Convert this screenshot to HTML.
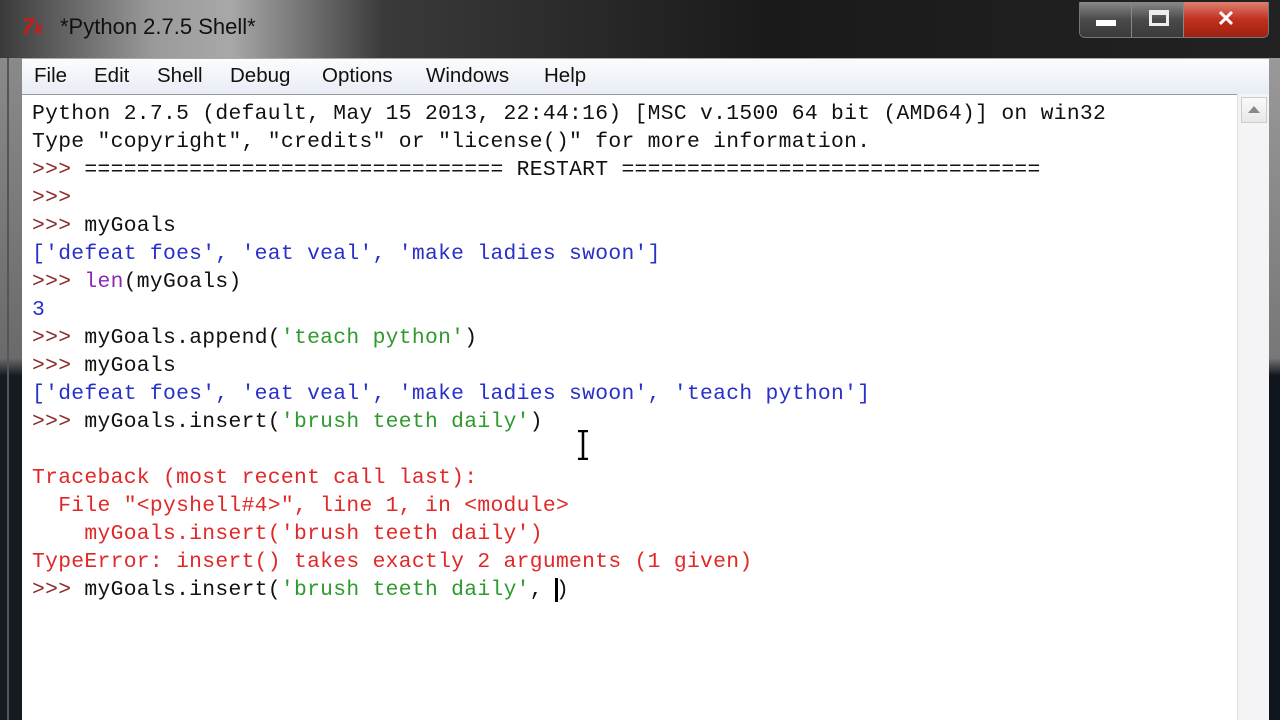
<!DOCTYPE html>
<html><head><style>
*{margin:0;padding:0;box-sizing:border-box}
body{width:1280px;height:720px;overflow:hidden;background:#111;position:relative;font-family:"Liberation Sans",sans-serif}
.title{position:absolute;left:0;top:0;width:1280px;height:58px;background:linear-gradient(90deg,#3a3a3a 0,#9a9a9a 12%,#a8a8a8 18%,#3a3a3a 30%,#1a1a1a 60%,#222 100%)}
.lframe{position:absolute;left:0;top:58px;width:22px;height:662px;background:linear-gradient(180deg,#8a8a8a 0,#6a6a6a 300px,#151a22 318px,#151a22 100%)}
.lframe:after{content:"";position:absolute;left:7px;top:0;width:2px;height:100%;background:#555}
.rframe{position:absolute;left:1269px;top:58px;width:11px;height:662px;background:linear-gradient(180deg,#999 0,#777 300px,#10141c 318px)}
.ttext{position:absolute;left:60px;top:14px;font-size:22px;color:#111}
.tk{position:absolute;left:22px;top:14px;font-size:22px;font-weight:bold;color:#d01818;font-style:italic}
.btns{position:absolute;left:1079px;top:2px;height:36px;width:190px;border:1px solid #777;border-top:none;border-radius:0 0 6px 6px;overflow:hidden;display:flex}
.b{height:100%;background:linear-gradient(#8a8a8a,#4a4a4a 50%,#3a3a3a);border-right:1px solid #888;position:relative}
.x{background:linear-gradient(#e08070,#c03020 50%,#a02010);flex:1;color:#fff;font-size:22px;font-weight:bold;text-align:center;line-height:34px}
.menu{position:absolute;left:22px;top:58px;width:1247px;height:36px;background:linear-gradient(#fbfcfe,#e8ecf4);border-top:1px solid #aaa;font-size:20.5px;color:#111}
.menu span{position:absolute;top:5px}
.text{position:absolute;left:22px;top:94px;width:1215px;height:626px;background:#fff;border-top:1px solid #999}
.sb{position:absolute;left:1237px;top:94px;width:32px;height:626px;background:#f4f4f6;border-left:1px solid #e0e0e0}
.sb div{position:absolute;left:3px;top:3px;width:26px;height:26px;background:linear-gradient(#fafafa,#e8e8e8);border:1px solid #ccc}
.sb div:after{content:"";position:absolute;left:6px;top:8px;border:6px solid transparent;border-bottom:7px solid #888;border-top:none}
pre{position:absolute;left:32px;top:100px;font-family:"Liberation Mono",monospace;font-size:21.33px;letter-spacing:0.3px;line-height:28px;color:#111}
.p{color:#8a2a2a}.o{color:#2830c8}.s{color:#2e9a2e}.f{color:#8a28b0}.e{color:#e02828}
.cur{position:absolute;left:555px;top:578px;width:3px;height:24px;background:#000}
.ib{position:absolute;left:576px;top:430px;width:14px;height:30px}
</style></head><body>
<div class="title"></div>
<div class="tk">7<span style="font-size:16px">k</span></div>
<div class="ttext">*Python 2.7.5 Shell*</div>
<div class="btns"><div class="b" style="width:52px"><div style="position:absolute;left:16px;top:18px;width:20px;height:6px;background:#fff"></div></div><div class="b" style="width:52px"><div style="position:absolute;left:17px;top:8px;width:20px;height:16px;border:3px solid #eee;border-top-width:5px"></div></div><div class="x">✕</div></div>
<div class="lframe"></div><div class="rframe"></div>
<div class="menu"><span style="left:12px">File</span><span style="left:72px">Edit</span><span style="left:135px">Shell</span><span style="left:208px">Debug</span><span style="left:300px">Options</span><span style="left:404px">Windows</span><span style="left:522px">Help</span></div>
<div class="text"></div>
<div class="sb"><div></div></div>
<pre>Python 2.7.5 (default, May 15 2013, 22:44:16) [MSC v.1500 64 bit (AMD64)] on win32
Type "copyright", "credits" or "license()" for more information.
<span class="p">&gt;&gt;&gt; </span>================================ RESTART ================================
<span class="p">&gt;&gt;&gt; </span>
<span class="p">&gt;&gt;&gt; </span>myGoals
<span class="o">['defeat foes', 'eat veal', 'make ladies swoon']</span>
<span class="p">&gt;&gt;&gt; </span><span class="f">len</span>(myGoals)
<span class="o">3</span>
<span class="p">&gt;&gt;&gt; </span>myGoals.append(<span class="s">'teach python'</span>)
<span class="p">&gt;&gt;&gt; </span>myGoals
<span class="o">['defeat foes', 'eat veal', 'make ladies swoon', 'teach python']</span>
<span class="p">&gt;&gt;&gt; </span>myGoals.insert(<span class="s">'brush teeth daily'</span>)

<span class="e">Traceback (most recent call last):
  File "&lt;pyshell#4&gt;", line 1, in &lt;module&gt;
    myGoals.insert('brush teeth daily')
TypeError: insert() takes exactly 2 arguments (1 given)</span>
<span class="p">&gt;&gt;&gt; </span>myGoals.insert(<span class="s">'brush teeth daily'</span>, )</pre>
<div class="cur"></div>
<svg class="ib" viewBox="0 0 14 30"><path d="M2 1h10M7 1v28M2 29h10" stroke="#000" stroke-width="2.5" fill="none"/></svg>
</body></html>
